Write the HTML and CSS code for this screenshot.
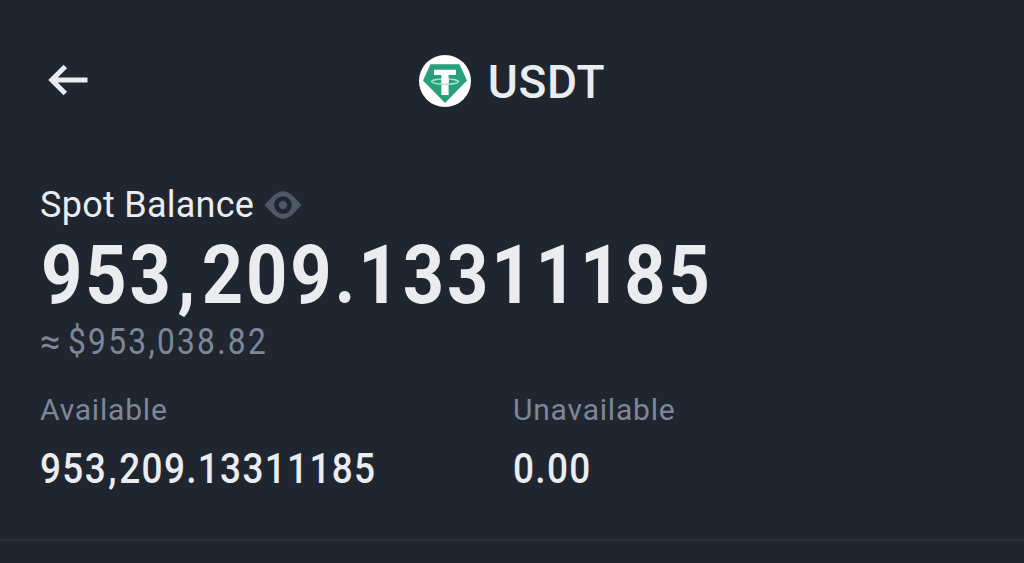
FILE: index.html
```html
<!DOCTYPE html>
<html lang="en">
<head>
    <meta charset="UTF-8">
    <meta name="viewport" content="width=device-width, initial-scale=1.0">
    <title>USDT</title>
    <link rel="stylesheet" href="styles.css">
</head>
<body>
    <header class="header">
        <a href="#" class="back" aria-label="Back">
            <svg width="40" height="34" viewBox="0 0 40 34" fill="none" stroke="#eaecef" stroke-width="5">
                <path d="M17.3 2.6 L3.8 16 L17.3 29.4 M4 16 H39.5"/>
            </svg>
        </a>
        <div class="coin">
            <svg width="52" height="52" viewBox="0 0 52 52">
                <circle cx="26" cy="26" r="26" fill="#fff"/>
                <path d="M11.5 9.3 H40.5 L48 25.5 L26 48 L4 25.5 Z" fill="#26a17b"/>
                <path d="M15 14.7 H37 V20 H29.6 V40 H22.4 V20 H15 Z" fill="#fff"/>
                <ellipse cx="26" cy="26.6" rx="13.4" ry="2.7" fill="none" stroke="#a9dcc9" stroke-width="1.4"/>
                <path d="M22.4 23 H29.6 V28.3 H22.4 Z" fill="#fff"/>
            </svg>
            <h1 class="coin-name">USDT</h1>
        </div>
    </header>
    <main class="balance">
        <div class="label">
            <span class="label-text">Spot Balance</span>
            <svg width="38" height="28" viewBox="0 0 38 28">
                <path d="M0.5 14 L9 5 Q19 -4.5 29 5 L37.5 14 L29 23 Q19 32.5 9 23 Z" fill="#4f5867"/>
                <circle cx="19" cy="14" r="6.5" fill="none" stroke="#202630" stroke-width="4.6"/>
            </svg>
        </div>
        <div class="total"><span class="digits">953<span class="comma">,</span>209.13311185</span></div>
        <div class="fiat"><span class="approx">≈</span><span class="digits">$953<span class="comma">,</span>038.82</span></div>
        <div class="columns">
            <div class="column">
                <div class="name">Available</div>
                <div class="amount"><span class="digits">953<span class="comma">,</span>209.13311185</span></div>
            </div>
            <div class="column">
                <div class="name">Unavailable</div>
                <div class="amount"><span class="digits">0.00</span></div>
            </div>
        </div>
    </main>
</body>
</html>
```
FILE: styles.css
```css
* {
    box-sizing: border-box;
}
body {
    margin: 0;
    min-height: 100vh;
    background-color: #202630;
    color: #eaecef;
    font-family: Roboto, "Liberation Sans", sans-serif;
    white-space: nowrap;
}
.header {
    display: grid;
    grid-template-columns: 1fr auto 1fr;
    align-items: center;
    height: 160px;
    padding: 2px 48px 0;
}
.back, .coin, .label {
    display: flex;
    align-items: center;
}
.coin {
    gap: 17px;
}
.coin-name {
    margin: 0;
    padding-top: 2px;
    font-size: 46px;
    font-weight: 500;
    line-height: 52px;
    letter-spacing: 0.7px;
}
.balance {
    height: 381px;
    padding: 25px 40px 0;
    border-bottom: 2px solid #2a303a;
}
.label {
    gap: 10px;
    height: 40px;
    font-size: 36px;
}
.label-text {
    letter-spacing: 0.27px;
}
/* condensed figures */
.digits {
    display: inline-block;
    transform: scaleX(0.88);
    transform-origin: left;
}
.total {
    margin-top: 10px;
    height: 80px;
    padding-left: 1px;
    font-size: 82px;
    font-weight: 700;
    line-height: 80px;
    letter-spacing: 3.3px;
}
.total .comma {
    margin: 0 4px 0 4px;
}
.fiat {
    margin-top: 7px;
    height: 40px;
    font-size: 36px;
    line-height: 40px;
    letter-spacing: 2.6px;
    color: #7e8798;
}
.approx {
    display: inline-block;
    width: 28px;
    letter-spacing: 0;
}
.columns {
    display: grid;
    grid-template-columns: 473px 1fr;
    margin-top: 30px;
}
.name {
    font-size: 30px;
    line-height: 36px;
    letter-spacing: 0.8px;
    color: #7e8798;
}
.amount {
    margin-top: 17px;
    font-size: 42px;
    font-weight: 500;
    line-height: 48px;
    letter-spacing: 1.5px;
}
.amount .comma {
    margin: 0 1.5px;
}
```
